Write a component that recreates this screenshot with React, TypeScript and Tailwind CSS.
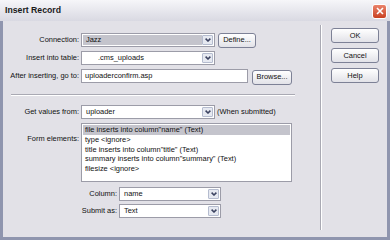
import React from "react";

function Arrow() {
  return (
    <div className="flex h-full w-[11px] items-center justify-center rounded-[1px] border border-[#b5bccf] bg-[#e6e9f1]">
      <svg width="6" height="4" viewBox="0 0 6 4">
        <path d="M0.6 0.6 L3 3 L5.4 0.6" stroke="#3b4260" strokeWidth="1.5" fill="none" />
      </svg>
    </div>
  );
}

function Select({ text, w, grey, textCls }: { text: string; w: string; grey?: boolean; textCls?: string }) {
  return (
    <div className={`flex h-[14px] ${w} border border-[#9c9ca8] bg-white p-px`}>
      <div className={`flex flex-1 items-center ${grey ? "bg-[#c4c4cc]" : "bg-white"} ${textCls ?? "pl-[3px]"}`}>{text}</div>
      <Arrow />
    </div>
  );
}

function Btn({ label, w, h }: { label: string; w: string; h: string }) {
  return (
    <div className={`flex ${w} ${h} items-center justify-center rounded-[3px] border border-[#7d8196] bg-gradient-to-b from-[#ffffff] to-[#e2e2e8] text-[7.45px]`}>
      {label}
    </div>
  );
}

export default function App() {
  const items = [
    'file inserts into column"name" (Text)',
    "type <ignore>",
    'title inserts into column"title" (Text)',
    'summary inserts into column"summary" (Text)',
    "filesize <ignore>",
  ];
  return (
    <div className="flex h-[240px] w-[390px] flex-col bg-[#8f95ae] font-['Liberation_Sans',Arial,sans-serif] text-[7.45px] text-[#111]">
      {/* title bar */}
      <div className="flex h-[21px] items-center justify-between bg-gradient-to-b from-[#f6f6f9] to-[#d9d9e2] pl-[5px] pr-[3px] pt-px">
        <span className="text-[8.7px] font-bold text-[#1a1a1a]">Insert Record</span>
        <div className="flex h-[15px] w-[15px] items-center justify-center rounded-[3px] border border-white bg-gradient-to-b from-[#e9826a] to-[#c9401f]">
          <svg width="8" height="8" viewBox="0 0 8 8">
            <path d="M1 1 L7 7 M7 1 L1 7" stroke="white" strokeWidth="1.6" />
          </svg>
        </div>
      </div>
      {/* body */}
      <div className="mx-[3px] mb-[3px] flex flex-1 bg-[#e2e1e7]">
        {/* left */}
        <div className="flex w-[317px] flex-col pt-[12px]">
          <div className="flex flex-col gap-[4px]">
            <div className="flex h-[14px] items-center">
              <div className="w-[78px] pr-[2px] text-right">Connection:</div>
              <Select text="Jazz" w="w-[134px]" grey />
              <div className="ml-[3px]">
                <Btn label="Define..." w="w-[38px]" h="h-[15px]" />
              </div>
            </div>
            <div className="flex h-[14px] items-center">
              <div className="w-[78px] pr-[2px] text-right">Insert into table:</div>
              <Select text=".cms_uploads" w="w-[134px]" textCls="pl-[15px]" />
            </div>
            <div className="flex h-[14px] items-center">
              <div className="w-[78px] pr-[2px] text-right">After inserting, go to:</div>
              <div className="flex h-[14px] w-[167px] items-center border border-[#9c9ca8] bg-white pl-[3px]">uploaderconfirm.asp</div>
              <div className="ml-[4px] mt-[2px]">
                <Btn label="Browse..." w="w-[40px]" h="h-[15px]" />
              </div>
            </div>
          </div>
          {/* separator */}
          <div className="ml-[8px] mt-[11px] w-[284px] border-t border-b border-t-[#a9a9b3] border-b-white" />
          <div className="mt-[9px] flex h-[14px] items-center">
            <div className="w-[78px] pr-[2px] text-right">Get values from:</div>
            <Select text="uploader" w="w-[134px]" />
            <div className="ml-[2px]">(When submitted)</div>
          </div>
          <div className="mt-[4px] flex">
            <div className="w-[78px] pr-[2px] pt-[10px] text-right">Form elements:</div>
            <div className="h-[59px] w-[211px] border border-[#9c9ca8] bg-white p-px">
              {items.map((t, i) => (
                <div key={i} className={`h-[9.75px] pl-[2px] leading-[9.75px] ${i === 0 ? "bg-[#c4c4cc]" : ""}`}>
                  {t}
                </div>
              ))}
            </div>
          </div>
          <div className="mt-[5px] flex h-[14px] items-center">
            <div className="w-[116px] pr-[2px] text-right">Column:</div>
            <Select text="name" w="w-[102px]" />
          </div>
          <div className="mt-[3px] flex h-[14px] items-center">
            <div className="w-[116px] pr-[2px] text-right">Submit as:</div>
            <Select text="Text" w="w-[102px]" />
          </div>
        </div>
        {/* vertical separator */}
        <div className="mb-[7px] mt-[4px] w-[2px] border-l border-r border-l-[#a9a9b3] border-r-white" />
        {/* right */}
        <div className="flex flex-col gap-[5px] pl-[9px] pt-[7px]">
          <Btn label="OK" w="w-[48px]" h="h-[15px]" />
          <Btn label="Cancel" w="w-[48px]" h="h-[15px]" />
          <Btn label="Help" w="w-[48px]" h="h-[15px]" />
        </div>
      </div>
    </div>
  );
}
